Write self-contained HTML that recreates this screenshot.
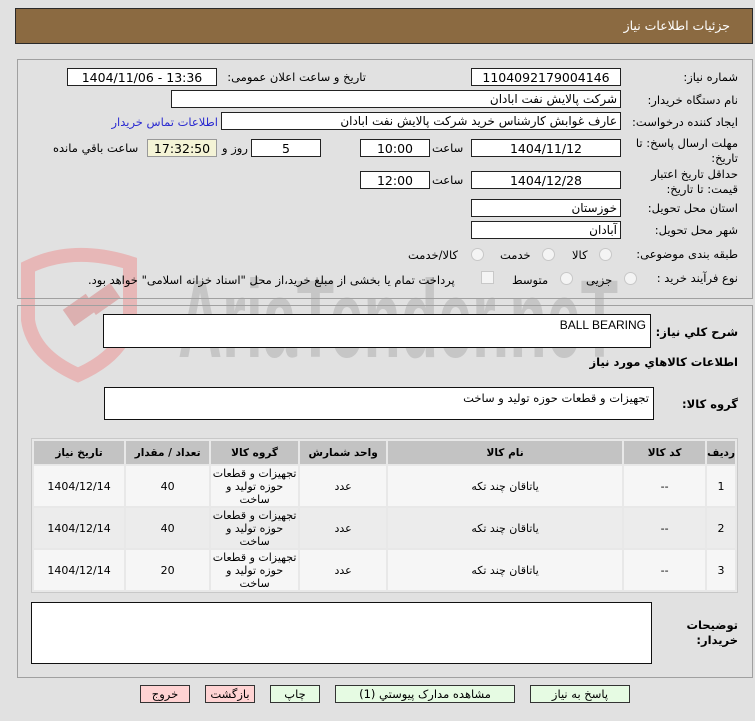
<!DOCTYPE html>
<html><head><meta charset="utf-8"><style>
body{margin:0;width:755px;height:721px;background:#e1e1e1;font-family:"DejaVu Sans","Liberation Sans",sans-serif;font-size:11.5px;color:#000;position:relative;overflow:hidden}
.a{position:absolute}
.hdr{left:15px;top:8px;width:736px;height:34px;background:#8b6a41;border:1px solid #2a2a2a}
.hdr span{position:absolute;right:22px;top:9px;color:#fff;font-size:12.5px}
.panel{border:1px solid #a0a0a0;left:17px;width:734px}
.in{position:absolute;background:#fff;border:1px solid #222;height:18px;line-height:17px;text-align:center;font-size:12.5px;box-sizing:border-box}
.r{text-align:right;padding-right:3px;direction:rtl;font-size:12px}
.lb{position:absolute;direction:rtl;white-space:nowrap;font-size:11.5px}
.rad{position:absolute;width:11px;height:11px;border-radius:50%;border:1px solid #c8c8c8;background:#f4f4f4}
.ta{position:absolute;background:#fff;border:1px solid #111;box-sizing:border-box;direction:rtl;padding:3px 4px;font-size:11.5px}
table{position:absolute;left:31px;top:438px;width:707px;border-collapse:separate;border-spacing:2px;background:#e8e8e8;border:1px solid #c8c8c8;font-size:11px}
th{background:#c3c3c3;height:23px;font-weight:bold;font-size:10.5px;padding:0}
td{height:40px;text-align:center;padding:0;line-height:13px}
tr.o td{background:#f6f6f6} tr.e td{background:#ececec}
.btn{position:absolute;top:685px;height:18px;border:1px solid #333;box-sizing:border-box;text-align:center;line-height:16px;font-size:11.5px}
.g{background:#e6fbe3}.p{background:#ffd3d3}
</style></head><body>
<div class="a hdr"><span>جزئیات اطلاعات نیاز</span></div>

<svg class="a" style="left:18px;top:245px" width="620" height="140">
<path d="M10 22 Q55 0 112 18 L112 75 Q105 110 60 130 Q15 110 10 75 Z" fill="none" stroke="#e7b7b7" stroke-width="14"/>
<rect x="48" y="55" width="28" height="20" fill="#dcb0b0" transform="rotate(-35 62 65)"/>
<rect x="70" y="45" width="30" height="18" fill="#dcb0b0" transform="rotate(-35 85 54)"/>
<text x="160" y="112" font-family="Liberation Sans" font-weight="bold" font-size="110" fill="#c6c6c6" textLength="440" lengthAdjust="spacingAndGlyphs">AriaTender.neT</text>
</svg>

<div class="a panel" style="top:59px;height:238px"></div>
<div class="a panel" style="top:305px;height:371px"></div>

<div class="lb" style="right:17px;top:70px">شماره نیاز:</div>
<div class="in" style="left:471px;top:68px;width:150px">1104092179004146</div>
<div class="lb" style="right:389px;top:70px">تاریخ و ساعت اعلان عمومی:</div>
<div class="in" style="left:67px;top:68px;width:150px">1404/11/06 - 13:36</div>

<div class="lb" style="right:17px;top:93px">نام دستگاه خریدار:</div>
<div class="in r" style="left:171px;top:90px;width:450px">شرکت پالایش نفت ابادان</div>

<div class="lb" style="right:17px;top:115px">ایجاد کننده درخواست:</div>
<div class="in r" style="left:221px;top:112px;width:400px">عارف غوابش کارشناس خرید شرکت پالایش نفت ابادان</div>
<div class="lb" style="right:537px;top:115px;color:#2a2ad0">اطلاعات تماس خریدار</div>

<div class="lb" style="right:17px;top:136px;line-height:15px;text-align:right">مهلت ارسال پاسخ: تا<br>تاریخ:</div>
<div class="in" style="left:471px;top:139px;width:150px">1404/11/12</div>
<div class="lb" style="left:432px;top:141px">ساعت</div>
<div class="in" style="left:360px;top:139px;width:70px">10:00</div>
<div class="in" style="left:251px;top:139px;width:70px">5</div>
<div class="lb" style="left:222px;top:141px">روز و</div>
<div class="in" style="left:147px;top:139px;width:70px;background:#f4f3d6;border-color:#999">17:32:50</div>
<div class="lb" style="left:53px;top:141px">ساعت باقي مانده</div>

<div class="lb" style="right:17px;top:167px;line-height:15px;text-align:right">حداقل تاریخ اعتبار<br>قیمت: تا تاریخ:</div>
<div class="in" style="left:471px;top:171px;width:150px">1404/12/28</div>
<div class="lb" style="left:432px;top:173px">ساعت</div>
<div class="in" style="left:360px;top:171px;width:70px">12:00</div>

<div class="lb" style="right:17px;top:201px">استان محل تحویل:</div>
<div class="in r" style="left:471px;top:199px;width:150px">خوزستان</div>
<div class="lb" style="right:17px;top:223px">شهر محل تحویل:</div>
<div class="in r" style="left:471px;top:221px;width:150px">آبادان</div>

<div class="lb" style="right:17px;top:247px">طبقه بندی موضوعی:</div>
<div class="rad" style="left:599px;top:248px"></div><div class="lb" style="left:572px;top:248px">کالا</div>
<div class="rad" style="left:542px;top:248px"></div><div class="lb" style="left:500px;top:248px">خدمت</div>
<div class="rad" style="left:471px;top:248px"></div><div class="lb" style="left:408px;top:248px">کالا/خدمت</div>

<div class="lb" style="right:17px;top:271px">نوع فرآیند خرید :</div>
<div class="rad" style="left:624px;top:272px"></div><div class="lb" style="left:586px;top:273px">جزیی</div>
<div class="rad" style="left:560px;top:272px"></div><div class="lb" style="left:512px;top:273px">متوسط</div>
<div class="a" style="left:481px;top:271px;width:11px;height:11px;border:1px solid #c8c8c8;background:#f4f4f4"></div>
<div class="lb" style="left:88px;top:273px">پرداخت تمام یا بخشی از مبلغ خرید،از محل "اسناد خزانه اسلامی" خواهد بود.</div>

<div class="lb" style="right:17px;top:325px;font-weight:bold">شرح کلي نياز:</div>
<div class="ta" style="left:103px;top:314px;width:548px;height:34px;font-family:'Liberation Sans';font-size:12px">BALL BEARING</div>
<div class="lb" style="right:17px;top:355px;font-weight:bold">اطلاعات کالاهاي مورد نياز</div>
<div class="lb" style="right:17px;top:397px;font-weight:bold">گروه کالا:</div>
<div class="ta" style="left:104px;top:387px;width:550px;height:33px">تجهیزات و قطعات حوزه تولید و ساخت</div>

<table dir="rtl">
<tr><th style="width:27px">ردیف</th><th style="width:81px">کد کالا</th><th style="width:234px">نام کالا</th><th style="width:86px">واحد شمارش</th><th style="width:87px">گروه کالا</th><th style="width:83px">تعداد / مقدار</th><th>تاریخ نیاز</th></tr>
<tr class="o"><td>1</td><td>--</td><td>یاتاقان چند تکه</td><td>عدد</td><td>تجهیزات و قطعات حوزه تولید و ساخت</td><td>40</td><td>1404/12/14</td></tr>
<tr class="e"><td>2</td><td>--</td><td>یاتاقان چند تکه</td><td>عدد</td><td>تجهیزات و قطعات حوزه تولید و ساخت</td><td>40</td><td>1404/12/14</td></tr>
<tr class="o"><td>3</td><td>--</td><td>یاتاقان چند تکه</td><td>عدد</td><td>تجهیزات و قطعات حوزه تولید و ساخت</td><td>20</td><td>1404/12/14</td></tr>
</table>

<div class="lb" style="right:17px;top:618px;font-weight:bold;line-height:15px;text-align:right">توضیحات<br>خریدار:</div>
<div class="ta" style="left:31px;top:602px;width:621px;height:62px"></div>

<div class="btn g" style="left:530px;width:100px">پاسخ به نیاز</div>
<div class="btn g" style="left:335px;width:180px">مشاهده مدارک پیوستي (1)</div>
<div class="btn g" style="left:270px;width:50px">چاپ</div>
<div class="btn p" style="left:205px;width:50px">بازگشت</div>
<div class="btn p" style="left:140px;width:50px">خروج</div>
</body></html>
